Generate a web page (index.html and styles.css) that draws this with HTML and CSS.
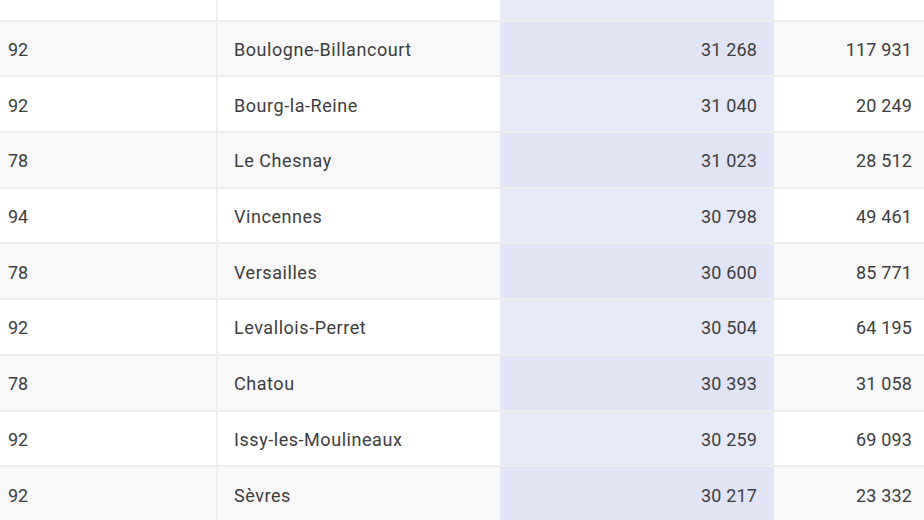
FILE: index.html
```html
<!DOCTYPE html>
<html lang="fr">
<head>
  <meta charset="UTF-8" />
  <meta name="viewport" content="width=device-width, initial-scale=1.0"/>
  <title>Revenu médian par commune</title>
  <link rel="stylesheet" href="styles.css">
</head>
<body>
  <div class="scroller">
    <table class="data-table">
      <colgroup>
        <col class="col-dep">
        <col class="col-commune">
        <col class="col-revenu">
        <col class="col-pop">
      </colgroup>
      <tbody>
        <tr><td></td><td></td><td class="sorted"></td><td></td></tr>
        <tr><td>92</td><td class="name">Boulogne-Billancourt</td><td class="num sorted">31 268</td><td class="num">117 931</td></tr>
        <tr><td>92</td><td class="name">Bourg-la-Reine</td><td class="num sorted">31 040</td><td class="num">20 249</td></tr>
        <tr><td>78</td><td class="name">Le Chesnay</td><td class="num sorted">31 023</td><td class="num">28 512</td></tr>
        <tr><td>94</td><td class="name">Vincennes</td><td class="num sorted">30 798</td><td class="num">49 461</td></tr>
        <tr><td>78</td><td class="name">Versailles</td><td class="num sorted">30 600</td><td class="num">85 771</td></tr>
        <tr><td>92</td><td class="name">Levallois-Perret</td><td class="num sorted">30 504</td><td class="num">64 195</td></tr>
        <tr><td>78</td><td class="name">Chatou</td><td class="num sorted">30 393</td><td class="num">31 058</td></tr>
        <tr><td>92</td><td class="name">Issy-les-Moulineaux</td><td class="num sorted">30 259</td><td class="num">69 093</td></tr>
        <tr><td>92</td><td class="name">Sèvres</td><td class="num sorted">30 217</td><td class="num">23 332</td></tr>
      </tbody>
    </table>
  </div>
</body>
</html>
```

FILE: styles.css
```css
html, body {
  margin: 0;
  height: 100%;
  overflow: hidden;
  background: #ffffff;
}
body {
  font-family: Roboto, "Noto Sans", sans-serif;
  color: #3d3d3d;
}
.scroller {
  margin-top: -34px;
  margin-left: -8px;
}
.data-table {
  border-collapse: collapse;
  table-layout: fixed;
  width: 936px;
  font-size: 18px;
}
.col-dep { width: 225px; }
.col-commune { width: 283px; }
.col-revenu { width: 274px; }
.col-pop { width: 154px; }
td {
  height: 51.7px;
  padding: 2px 16px 0;
  border-bottom: 2px solid #ececec;
  white-space: nowrap;
}
td:first-child {
  border-right: 2px solid #eeeeee;
}
tr:nth-child(even) td {
  background: #f8f8f8;
}
.name {
  letter-spacing: 0.55px;
}
.num {
  text-align: right;
  padding-right: 17px;
  letter-spacing: 0.15px;
}
td.sorted {
  background: #e6e9f8;
}
tr:nth-child(even) td.sorted {
  background: #e1e4f4;
}
td:last-child {
  padding-right: 16px;
}
```
